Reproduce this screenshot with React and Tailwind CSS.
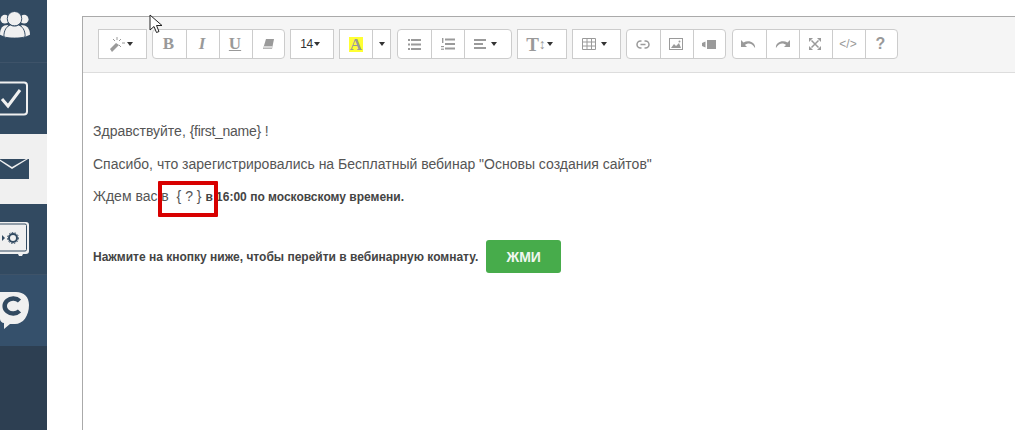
const G = "#9a9a9a";

const Caret = () => <span className="ml-[1px] inline-block h-0 w-0 border-x-[3px] border-t-[4px] border-x-transparent border-t-[#333]" />;

const Btn = ({ w, children }) => (
    <div className={`flex h-full items-center justify-center border-l border-[#ccc] first:border-l-0 ${w}`}>{children}</div>
);

const Group = ({ children, square }) => (
    <div className={`flex h-[30px] border border-[#ccc] bg-white ${square ? "" : "rounded-[4px]"}`}>{children}</div>
);

const Wand = () => (
    <svg width="17" height="15" viewBox="0 0 17 15">
        <path d="M1 12 L7 6 L10 8 L3 15 Z" fill={G} />
        <path d="M8 0v3M13 6h3M4 2l2 2M12 2l-2 2M12 10l-2-2" stroke={G} strokeWidth="1" />
    </svg>
);

const Eraser = () => (
    <svg width="11" height="10" viewBox="0 0 11 10">
        <path d="M3 0h8L9 10H0z" fill={G} />
        <path d="M1 7h8.500l-.5 2.500H.5z" fill="#fff" opacity=".6" />
    </svg>
);

const UList = () => (
    <svg width="13" height="11" viewBox="0 0 13 11" fill={G}>
        <rect x="0" y="0" width="2" height="2" /><rect x="3" y="0" width="10" height="2" />
        <rect x="0" y="4.500" width="2" height="2" /><rect x="3" y="4.500" width="10" height="2" />
        <rect x="0" y="9" width="2" height="2" /><rect x="3" y="9" width="10" height="2" />
    </svg>
);

const OList = () => (
    <svg width="14" height="12" viewBox="0 0 14 12" fill={G}>
        <rect x="1" y="0" width="1.400" height="5" /><rect x="0" y="8" width="3" height="1.200" /><rect x="0" y="10.600" width="3" height="1.200" />
        <rect x="4" y="0.500" width="10" height="2" /><rect x="4" y="5" width="10" height="2" /><rect x="4" y="9.500" width="10" height="2" />
    </svg>
);

const Align = () => (
    <svg width="12" height="10" viewBox="0 0 12 10" fill={G}>
        <rect width="12" height="2" /><rect y="4" width="9" height="2" /><rect y="8" width="12" height="2" />
    </svg>
);

const TableIcon = () => (
    <svg width="14" height="12" viewBox="0 0 14 12" fill="none" stroke={G} strokeWidth="1">
        <path d="M.5.5h13v11H.5zM.5 4h13M.5 8h13M5 .5v11M9.500 .5v11" />
    </svg>
);

const LinkIcon = () => (
    <svg width="14" height="9" viewBox="0 0 14 9" fill="none" stroke={G} strokeWidth="1.500">
        <path d="M5.500 1H4.500a3.500 3.500 0 000 7h1M8.500 1h1a3.500 3.500 0 010 7h-1M4.500 4.500h5" />
    </svg>
);

const Picture = () => (
    <svg width="14" height="12" viewBox="0 0 14 12">
        <rect x=".5" y=".5" width="13" height="11" fill="#fff" stroke={G} />
        <path d="M2 10l3-4 2 2 3-3 2 5z" fill={G} /><circle cx="10.500" cy="3.500" r="1" fill={G} />
    </svg>
);

const Video = () => (
    <svg width="14" height="9" viewBox="0 0 14 9" fill={G}>
        <rect x="5" y="0" width="9" height="9" /><path d="M0 3L3.500 1.500V7.500L0 6z" />
    </svg>
);

const Undo = ({ flip }) => (
    <svg width="15" height="8" viewBox="0 0 15 8" className={flip ? "-scale-x-100" : ""}>
        <path d="M0 0v7h6L4 5c3-2.500 7-2 10 3 1-5-6-9-11.500-5.500z" fill={G} />
    </svg>
);

const Expand = () => (
    <svg width="12" height="12" viewBox="0 0 12 12" fill={G} stroke={G}>
        <path d="M2.500 2.500l7 7M9.500 2.500l-7 7" strokeWidth="1.500" />
        <path d="M0 0h4L0 4zM12 0v4L8 0zM0 12V8l4 4zM12 12H8l4-4z" stroke="none" />
    </svg>
);

const UsersIcon = () => (
    <svg width="31" height="30" viewBox="0 0 31 30" fill="#f0f0f0">
        <circle cx="25" cy="8" r="4.500" /><path d="M22 14c5 0 9 3 9 10l-5 2-4-8z" />
        <circle cx="5" cy="8" r="4.500" /><path d="M8 14c-5 0-8 3-8 10l5 2 4-8z" />
        <circle cx="15" cy="7.500" r="7.500" stroke="#324a61" strokeWidth="1" />
        <path d="M4 26c0-7 3-11 7-12 2.500 1.500 5.500 1.500 8 0 4 1 7 5 7 12-3 2-19 2-22 0z" stroke="#324a61" strokeWidth="1" />
    </svg>
);

const CheckIcon = () => (
    <svg width="29" height="35" viewBox="0 0 29 35" fill="none">
        <rect x="-6" y="1.500" width="33" height="32" rx="3" stroke="#f0f0f0" strokeWidth="2" />
        <path d="M2 18l6 7L20 9" stroke="#f0f0f0" strokeWidth="3" />
    </svg>
);

const MailIcon = () => (
    <svg width="29" height="20" viewBox="0 0 29 20" fill="#324a61">
        <path d="M0 2L12 10 28 0h1v20H0z" />
        <path d="M0 0h26L12 8 0 .5z" />
    </svg>
);

const SafeIcon = () => (
    <svg width="29" height="36" viewBox="0 0 29 36">
        <path d="M0 1h26a3 3 0 013 3v26a3 3 0 01-3 3h-3l-1 2h-3l-1-2H0z" fill="#f0f0f0" />
        <path d="M0 3h25a1.500 1.500 0 011.500 1.500v24a1.500 1.500 0 01-1.500 1.500H0" fill="none" stroke="#324a61" strokeWidth="1" />
        <path d="M2 14l3 3-3 3z" fill="#324a61" />
        <circle cx="13" cy="17" r="4" fill="none" stroke="#324a61" strokeWidth="2" />
        <circle cx="13" cy="17" r="5.500" fill="none" stroke="#324a61" strokeWidth="1" strokeDasharray="1.500 1.500" />
    </svg>
);

const VkIcon = () => (
    <svg width="30" height="40" viewBox="0 0 30 40">
        <path d="M0 1h16c8 0 13 5 13 13 0 11-6 19-14 19h-5l-6 5v-6c-2 0-4-2-4-4z" fill="#f0f0f0" />
        <path d="M19.500 10a8.500 7.500 0 1 0 0 10" fill="none" stroke="#324a61" strokeWidth="4.500" />
    </svg>
);

const Cursor = () => (
    <svg width="14" height="20" viewBox="0 0 14 20" className="absolute left-[149px] top-[14px]">
        <path d="M1 1v15l4-3.500 2.500 6 2.500-1-2.500-6H13z" fill="#fff" stroke="#222" strokeWidth="1" />
    </svg>
);

const Toolbar = () => (
    <div className="flex h-[56px] items-center gap-[5px] border-b border-[#ddd] bg-[#f5f5f5] pl-[15px] pb-[1px]">
        <Group square><Btn w="w-[47px] pr-[3px]"><Wand /><Caret /></Btn></Group>
        <Group>
            <Btn w="w-[33px] pr-[2px]"><span className="font-['Liberation_Serif'] text-[17px] font-bold text-[#999]">B</span></Btn>
            <Btn w="w-[33px] pr-[2px]"><span className="font-['Liberation_Serif'] text-[17px] font-bold italic text-[#999]">I</span></Btn>
            <Btn w="w-[33px] pr-[2px]"><span className="font-['Liberation_Serif'] text-[17px] font-bold text-[#999] underline">U</span></Btn>
            <Btn w="w-[32px]"><Eraser /></Btn>
        </Group>
        <Group square><Btn w="w-[42px] pr-[4px]"><span className="text-[12px] tracking-[-0.5px] text-[#333]">14</span><Caret /></Btn></Group>
        <Group square>
            <Btn w="w-[32px]"><span className="bg-[#ffff33] px-[1px] font-['Liberation_Serif'] text-[17px] leading-[15px] font-bold text-[#999]">A</span></Btn>
            <Btn w="w-[18px]"><span className="inline-block h-0 w-0 border-x-[3px] border-t-[4px] border-x-transparent border-t-[#333]" /></Btn>
        </Group>
        <div className="ml-[1px]">
            <Group>
                <Btn w="w-[33px]"><UList /></Btn>
                <Btn w="w-[33px]"><OList /></Btn>
                <Btn w="w-[47px] pr-[5px]"><Align /><span className="ml-[4px] flex"><Caret /></span></Btn>
            </Group>
        </div>
        <Group square>
            <Btn w="w-[48px] pr-[5px]">
                <span className="font-['Liberation_Serif'] text-[19px] leading-none font-bold text-[#999]">T</span>
                <span className="text-[14px] leading-none text-[#999]">↕</span>
                <Caret />
            </Btn>
        </Group>
        <Group square><Btn w="w-[47px] pr-[4px]"><TableIcon /><span className="ml-[4px] flex"><Caret /></span></Btn></Group>
        <Group>
            <Btn w="w-[33px] pr-[2px]"><LinkIcon /></Btn>
            <Btn w="w-[33px] pr-[2px]"><Picture /></Btn>
            <Btn w="w-[32px] pr-[2px]"><Video /></Btn>
        </Group>
        <div className="ml-[1px]">
            <Group>
                <Btn w="w-[33px] pr-[2px]"><Undo /></Btn>
                <Btn w="w-[33px] pr-[2px]"><Undo flip /></Btn>
                <Btn w="w-[33px] pr-[2px]"><Expand /></Btn>
                <Btn w="w-[33px] pr-[2px]"><span className="text-[12px] text-[#999]">&lt;/&gt;</span></Btn>
                <Btn w="w-[32px] pr-[2px]"><span className="text-[16px] font-bold text-[#999]">?</span></Btn>
            </Group>
        </div>
    </div>
);

export default function App() {
    return (
        <div className="relative flex h-[430px] w-[1015px] overflow-hidden bg-white font-['Liberation_Sans',Arial,sans-serif] text-[#555]">
            <aside className="flex h-full w-[47px] shrink-0 flex-col bg-[#2d3f52]">
                <div className="flex h-[63px] items-start justify-end border-b border-[#3e5369] bg-[#324a61] pt-[11px] pr-[17px]">
                    <UsersIcon />
                </div>
                <div className="flex h-[71px] items-center justify-end bg-[#324a61] pr-[18px] pb-[1px]">
                    <CheckIcon />
                </div>
                <div className="flex h-[70px] items-center justify-end bg-[#f0f0f0] pr-[18px] pb-[1px]">
                    <MailIcon />
                </div>
                <div className="flex h-[71px] items-center justify-end border-b border-[#3e5369] bg-[#324a61] pr-[18px] pb-[1px]">
                    <SafeIcon />
                </div>
                <div className="flex h-[71px] items-center justify-end bg-[#35506b] pr-[17px]">
                    <VkIcon />
                </div>
            </aside>

            <main className="ml-[35px] mt-[16px] min-w-0 flex-1 border-t border-l border-[#aaa]">
                <Toolbar />
                <div className="pl-[10px] pt-[48px] text-[14px] leading-[20px]">
                    <p>Здравствуйте, <span className="tracking-[-0.3px]">{"{first_name}"}</span> !</p>
                    <p className="mt-[13px]">Спасибо, что зарегистрировались на Бесплатный вебинар "Основы создания сайтов"</p>
                    <p className="relative mt-[12px]">
                        Ждем вас в &nbsp;{"{ ? }"} <b className="text-[12px] text-[#444]">в 16:00 по московскому времени.</b>
                        <span className="absolute left-[65px] top-[-5px] h-[36px] w-[60px] rounded-[1px] border-[4px] border-[#d80000]" />
                    </p>
                    <div className="mt-[33px] flex items-center">
                        <b className="text-[12px] text-[#444]">Нажмите на кнопку ниже, чтобы перейти в вебинарную комнату.</b>
                        <div className="ml-[8px] flex h-[33px] w-[75px] items-center justify-center rounded-[3px] bg-[#47ac4b] text-[14px] font-bold text-[#f0f7f0]">ЖМИ</div>
                    </div>
                </div>
            </main>
            <Cursor />
        </div>
    );
}
